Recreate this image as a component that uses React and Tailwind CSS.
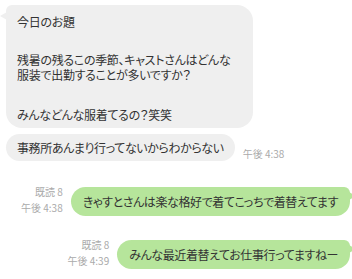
export default function App() {
  return (
    <div
      className="w-[352px] h-[279px] bg-white overflow-hidden text-[12px] text-[#333] [font-feature-settings:'palt']"
      style={{ fontFamily: '"Noto Sans CJK JP", "Noto Sans", sans-serif' }}
    >
      <div className="flex flex-col pt-[5px]">
        {/* first message */}
        <div className="relative ml-[6px] w-[247px] whitespace-nowrap rounded-[16px] rounded-tl-[6px] bg-[#efefef] pl-[11px] pt-[9px] pb-[6px] leading-[15px] tracking-[-0.3px]">
          <span className="absolute left-[-6px] top-[7px] h-0 w-0 border-t-[4px] border-b-[4px] border-r-[7px] border-t-transparent border-b-transparent border-r-[#efefef]" />
          <p>今日のお題</p>
          <p className="mt-[23px]">残暑の残るこの季節、キャストさんはどんな</p>
          <p>服装で出勤することが多いですか？</p>
          <p className="mt-[25px]">みんなどんな服着てるの？笑笑</p>
        </div>

        <div className="mt-[6px] flex items-end gap-[8px]">
          <div className="ml-[6px] whitespace-nowrap rounded-[15px] bg-[#efefef] px-[11px] py-[6px] leading-[15px] tracking-[-0.4px]">
            事務所あんまり行ってないからわからない
          </div>
          <span className="pb-[1px] text-[10px] leading-[12px] text-[#aaa]">午後 4:38</span>
        </div>

        <div className="mt-[23px] flex items-end justify-end gap-[8px] pr-[2px]">
          <div className="flex flex-col items-end text-[10px] leading-[16px] text-[#aaa]">
            <span>既読 8</span>
            <span>午後 4:38</span>
          </div>
          <div className="relative whitespace-nowrap rounded-[15px] rounded-tr-[6px] bg-[#b6e59b] px-[12px] py-[7px] leading-[15px] tracking-[-0.4px]">
            <span className="absolute right-[-6px] top-[5px] h-0 w-0 border-t-[4px] border-b-[4px] border-l-[7px] border-t-transparent border-b-transparent border-l-[#b6e59b]" />
            きゃすとさんは楽な格好で着てこっちで着替えてます
          </div>
        </div>

        <div className="mt-[21px] flex items-end justify-end gap-[8px] pr-[2px]">
          <div className="flex flex-col items-end text-[10px] leading-[16px] text-[#aaa]">
            <span>既読 8</span>
            <span>午後 4:39</span>
          </div>
          <div className="relative whitespace-nowrap rounded-[15px] rounded-tr-[6px] bg-[#b6e59b] px-[12px] py-[7px] leading-[15px] tracking-[-0.4px]">
            <span className="absolute right-[-6px] top-[5px] h-0 w-0 border-t-[4px] border-b-[4px] border-l-[7px] border-t-transparent border-b-transparent border-l-[#b6e59b]" />
            みんな最近着替えてお仕事行ってますねー
          </div>
        </div>
      </div>
    </div>
  );
}
